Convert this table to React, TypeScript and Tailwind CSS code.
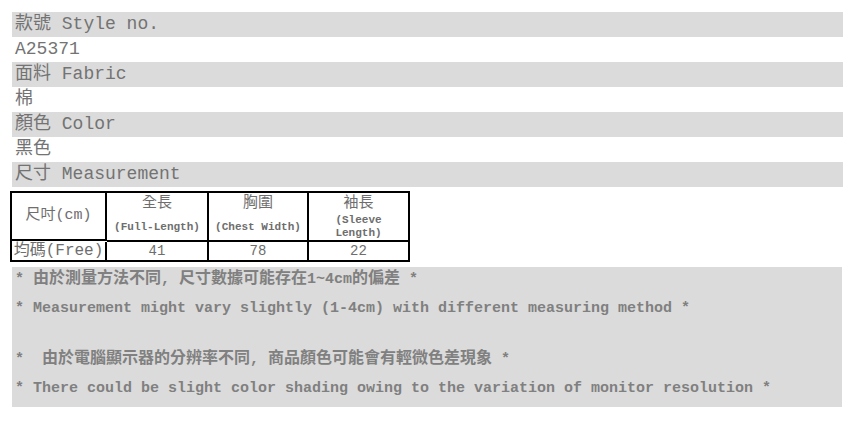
const mono = "font-['Liberation_Mono','Noto_Sans_CJK_TC',monospace]";

const info: { label: string; value: string }[] = [
  { label: "款號 Style no.", value: "A25371" },
  { label: "面料 Fabric", value: "棉" },
  { label: "顏色 Color", value: "黑色" },
];

function Bar({ text, gray }: { text: string; gray?: boolean }) {
  return (
    <div className={`h-[25px] pl-[3px] text-[18px] leading-[25px] text-[#737373] ${gray ? "bg-[#dbdbdb]" : ""}`}>
      {text}
    </div>
  );
}

function HeadCell({ zh, en, last }: { zh: string; en: string[]; last?: boolean }) {
  return (
    <div className={`flex flex-col items-center border-b-2 border-black ${last ? "" : "border-r-2"}`}>
      <div className="h-[21px] text-[15px] leading-[21px]">{zh}</div>
      <div className={`font-bold text-[11px] ${en.length > 1 ? "leading-[13px]" : "mt-[5px] leading-[16px]"}`}>
        {en.map((l) => (
          <div key={l}>{l}</div>
        ))}
      </div>
    </div>
  );
}

// bigger glyphs for the chinese runs in the notes
const Zh = ({ children }: { children: string }) => <span className="text-[16px]">{children}</span>;

export default function App() {
  return (
    <main className={`min-h-screen bg-white pt-[12px] ${mono}`}>
      <div className="ml-[12px]">
        {info.map((row) => (
          <div key={row.label}>
            <Bar text={row.label} gray />
            <Bar text={row.value} />
          </div>
        ))}
        <Bar text="尺寸 Measurement" gray />
      </div>

      <div className="ml-[10px] mt-[4px] grid w-[400px] grid-cols-[95px_102px_100px_99px] border-2 border-black text-[#6e6e6e]">
        <div className="flex h-[48px] items-center justify-center border-r-2 border-b-2 border-black text-[15px]">尺吋(cm)</div>
        <HeadCell zh="全長" en={["(Full-Length)"]} />
        <HeadCell zh="胸圍" en={["(Chest Width)"]} />
        <HeadCell zh="袖長" en={["(Sleeve", "Length)"]} last />
        <div className="h-[18px] border-r-2 border-black text-center text-[16px] leading-[18px]">均碼(Free)</div>
        <div className="h-[18px] border-r-2 border-black text-center text-[14px] leading-[18px]">41</div>
        <div className="h-[18px] border-r-2 border-black text-center text-[14px] leading-[18px]">78</div>
        <div className="h-[18px] text-center text-[14px] leading-[18px]">22</div>
      </div>

      <div className="ml-[12px] mr-px mt-[5px] bg-[#dbdbdb] pl-[3px] pb-[6px] text-[15px] font-bold whitespace-pre text-[#808080]">
        <p className="h-[24px] leading-[24px]">
          * <Zh>由於測量方法不同</Zh>, <Zh>尺寸數據可能存在</Zh>1~4cm<Zh>的偏差</Zh> *
        </p>
        <p className="mt-[6px] h-[24px] leading-[24px]">* Measurement might vary slightly (1-4cm) with different measuring method *</p>
        <p className="mt-[26px] h-[24px] leading-[24px]">
          *  <Zh>由於電腦顯示器的分辨率不同</Zh>, <Zh>商品顏色可能會有輕微色差現象</Zh> *
        </p>
        <p className="mt-[6px] h-[24px] leading-[24px]">* There could be slight color shading owing to the variation of monitor resolution *</p>
      </div>
    </main>
  );
}
